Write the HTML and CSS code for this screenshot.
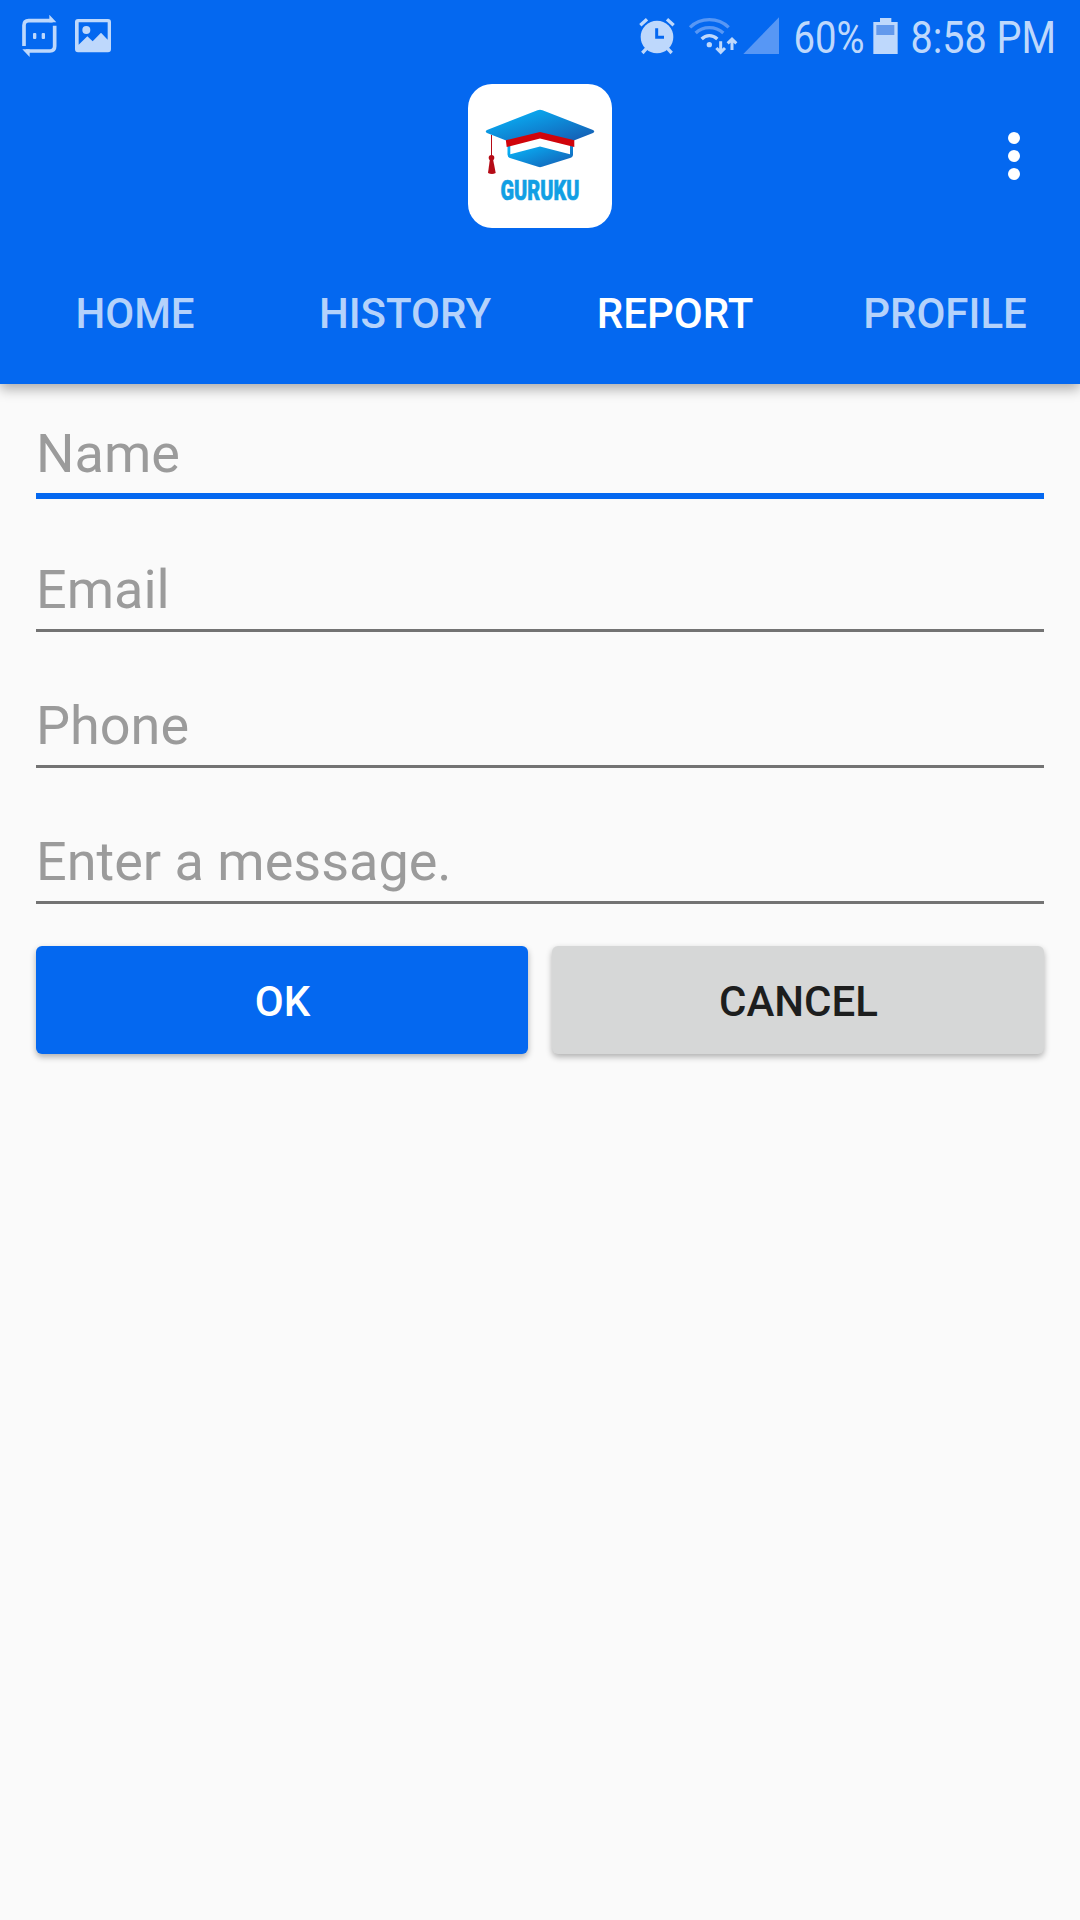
FILE: index.html
```html
<!DOCTYPE html>
<html lang="en">
<head>
<meta charset="utf-8">
<title>Guruku - Report</title>
<link rel="stylesheet" href="styles.css">
</head>
<body>
<header class="app-header">
  <div class="status-bar">
    <div class="status-group notifications">
      <svg width="40" height="72" viewBox="60 0 120 216">
        <g fill="none" stroke="#bed8fc" stroke-width="11">
          <path d="M72 138V76Q72 62 86 62H158M164 77V139Q164 153 150 153H78"/>
        </g>
        <path fill="#bed8fc" d="M148 44L169 67H148ZM67 148H89V171Z"/>
        <rect fill="#bed8fc" x="99" y="99" width="10" height="18" rx="3"/>
        <rect fill="#bed8fc" x="125" y="99" width="10" height="18" rx="3"/>
      </svg>
      <svg width="40" height="72" viewBox="219 0 120 216">
        <path fill="#bed8fc" fill-rule="evenodd" d="M234 57H324Q333 57 333 66V148Q333 157 324 157H234Q225 157 225 148V66Q225 57 234 57ZM236 67V134L262 109L278 124L303 98L323 119V67Z"/>
        <circle cx="259" cy="90" r="12" fill="#bed8fc"/>
      </svg>
    </div>
    <div class="status-group indicators">
      <svg class="alarm" width="38" height="72" viewBox="54 0 114 216">
        <circle cx="111" cy="111" r="49" fill="#bed8fc"/>
        <path fill="none" stroke="#bed8fc" stroke-width="10" d="M61 76L81 58M141 58L161 76M79 146L67 159M143 146L155 159"/>
        <path fill="none" stroke="#0568f1" stroke-width="9" d="M110 85V112H132"/>
      </svg>
      <svg class="wifi" width="50" height="72" viewBox="204 0 150 216">
        <g fill="none" stroke-width="10">
          <path stroke="#5797f5" d="M210 82Q234 59 268 59T326 82M227 99Q244 83 268 83T310 99"/>
          <path stroke="#bed8fc" d="M245 117Q255 107 268 107T292 117"/>
          <path stroke="#bed8fc" stroke-width="9" d="M302 124V156M289 144L302 157L315 144M336 150V118M323 130L336 117L349 130"/>
        </g>
        <circle cx="268" cy="134" r="8" fill="#bed8fc"/>
      </svg>
      <svg class="signal" width="38" height="72" viewBox="366 0 114 216">
        <path fill="#5797f5" d="M477 52V162H370Z"/>
      </svg>
      <svg class="percent" width="74" height="72" viewBox="0 0 74 72">
        <text class="status-text" x="1.500" y="53" textLength="71" lengthAdjust="spacingAndGlyphs">60%</text>
      </svg>
      <svg class="battery" width="25" height="72" viewBox="281 0 75 216">
        <path fill="#bed8fc" d="M302 54H336V66H355V162H282V66H302Z"/>
        <rect fill="#6399ec" x="291" y="75" width="54" height="30"/>
      </svg>
      <svg class="clock" width="148" height="72" viewBox="0 0 148 72">
        <text class="status-text" x="0.500" y="53" textLength="145.500" lengthAdjust="spacingAndGlyphs">8:58 PM</text>
      </svg>
    </div>
  </div>
  <div class="toolbar">
    <svg class="logo" width="144" height="144" viewBox="0 0 144 144">
      <defs>
        <linearGradient id="cap" x1="0" y1="0" x2="1" y2="1">
          <stop offset="0.150" stop-color="#08aef4"/>
          <stop offset="0.900" stop-color="#1463b8"/>
        </linearGradient>
      </defs>
      <rect width="144" height="144" rx="24" fill="#fff"/>
      <path fill="url(#cap)" d="M39.500 60V70.500Q39.500 73 42 74L70 82.800Q72 83.600 74 82.800L102 74Q105 73 105 70.500V60H102V70.300L72 62.600L42.300 70.300V60Z"/>
      <path fill="#d0040b" d="M37.700 55L72 46L106.300 55V63L72 54.500L38.700 63Z"/>
      <path fill="url(#cap)" d="M19 46L69.500 26.300Q72 25.200 74.500 26.300L125 46Q127.500 47.500 125 49L106.500 56.300L72 48L37.500 56.300L19 49Q16.500 47.500 19 46Z"/>
      <path fill="none" stroke="#b50b16" d="M23.500 51V72"/>
      <circle cx="23.500" cy="73.800" r="2.800" fill="#b50b16"/>
      <path fill="#b50b16" d="M21.800 76H25.200L27.700 89Q24 91 20 89Z"/>
      <text class="logo-text" x="32.500" y="116.300" textLength="79" lengthAdjust="spacingAndGlyphs">GURUKU</text>
    </svg>
    <button class="overflow" aria-label="More options"><i></i><i></i><i></i></button>
  </div>
  <nav class="tabs">
    <a class="tab">HOME</a>
    <a class="tab">HISTORY</a>
    <a class="tab active">REPORT</a>
    <a class="tab">PROFILE</a>
  </nav>
</header>
<main class="form">
  <div class="field focused">Name</div>
  <div class="field">Email</div>
  <div class="field">Phone</div>
  <div class="field">Enter a message.</div>
  <div class="actions">
    <button class="btn primary">OK</button>
    <button class="btn">CANCEL</button>
  </div>
</main>
</body>
</html>
```

FILE: styles.css
```css
* { box-sizing: border-box; }

body {
  margin: 0;
  min-height: 1920px;
  background: #fafafa;
  font-family: Roboto, "Liberation Sans", sans-serif;
}

svg {
  display: block;
  flex: none;
  overflow: visible;
}

.app-header {
  height: 384px;
  background: #0468f0;
  box-shadow: 0 5px 12px rgba(0, 0, 0, 0.32);
}

.status-bar {
  height: 72px;
  padding: 0 22px 0 20px;
  display: flex;
  justify-content: space-between;
}

.status-group { display: flex; }
.notifications { gap: 13px; }
.wifi { margin-left: 12px; }
.signal { margin-left: 4px; }
.percent { margin-left: 12px; }
.battery { margin-left: 7px; }
.clock { margin-left: 12px; }

.status-text {
  font-size: 45px;
  fill: #bed8fc;
}

.toolbar {
  height: 168px;
  padding: 0 48px;
  display: grid;
  grid-template-columns: 36px 1fr 36px;
  align-items: center;
}

.logo {
  grid-column: 2;
  justify-self: center;
}

.logo-text {
  font-size: 27px;
  font-weight: 900;
  fill: #119fe4;
  stroke: #119fe4;
  stroke-width: 0.6px;
}

.overflow {
  height: 72px;
  padding: 0;
  border: 0;
  background: none;
  display: flex;
  flex-direction: column;
  align-items: center;
  justify-content: center;
  gap: 6px;
}

.overflow i {
  width: 12px;
  height: 12px;
  border-radius: 50%;
  background: #fff;
}

.tabs {
  height: 144px;
  display: grid;
  grid-template-columns: repeat(4, 1fr);
}

.tab {
  padding-top: 49px;
  text-align: center;
  font-size: 42px;
  font-weight: 500;
  line-height: 50px;
  color: #b4d2fb;
}

.tab.active { color: #fff; }

.form { padding: 0 36px; }

.field {
  height: 136px;
  padding-top: 62px;
  border-bottom: 3px solid #737373;
  font-size: 54px;
  line-height: 64px;
  color: #9b9b9b;
}

.field.focused {
  height: 115px;
  padding-top: 38px;
  border-bottom: 6px solid #0468f0;
}

.field.focused + .field {
  height: 133px;
  padding-top: 59px;
}

.actions {
  margin-top: 42px;
  display: grid;
  grid-template-columns: 1fr 1fr;
  gap: 24px;
}

.btn {
  height: 108px;
  padding: 3px 0 0 1px;
  border: 0;
  border-radius: 6px;
  background: #d6d7d7;
  box-shadow: 0 3px 6px rgba(0, 0, 0, 0.3);
  font: 500 42px/50px Roboto, "Liberation Sans", sans-serif;
  color: #1d1e1e;
}

.btn.primary {
  background: #0468f0;
  color: #fff;
}
```
